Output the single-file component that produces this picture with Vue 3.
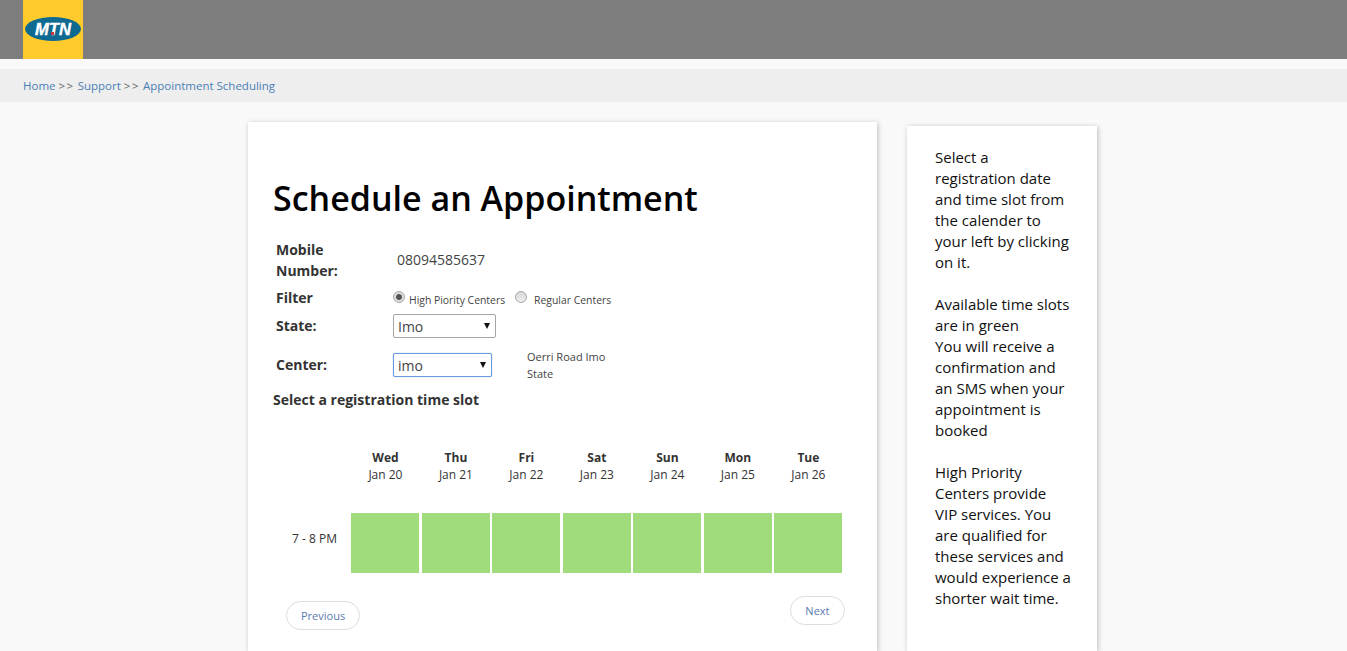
<script setup>
const days = [
  { name: 'Wed', date: 'Jan 20' },
  { name: 'Thu', date: 'Jan 21' },
  { name: 'Fri', date: 'Jan 22' },
  { name: 'Sat', date: 'Jan 23' },
  { name: 'Sun', date: 'Jan 24' },
  { name: 'Mon', date: 'Jan 25' },
  { name: 'Tue', date: 'Jan 26' },
]
</script>

<template>
  <header class="topbar">
    <div class="logo">
      <svg width="60" height="59" viewBox="0 0 60 59">
        <ellipse cx="30" cy="29" rx="28" ry="12" fill="#0f6a92" />
        <text x="30" y="35" text-anchor="middle" textLength="36" lengthAdjust="spacingAndGlyphs" class="logo-text">MTN</text>
        <rect x="28" y="32" width="3" height="3" fill="#c8323c" />
      </svg>
    </div>
  </header>

  <nav class="crumbs">
    <a href="#">Home</a> <span class="sep">&gt;&gt;</span> <a href="#">Support</a> <span class="sep">&gt;&gt;</span> <a href="#">Appointment Scheduling</a>
  </nav>

  <main class="content">
    <section class="card">
      <h1>Schedule an Appointment</h1>

      <div class="form">
        <label class="field-label">Mobile Number:</label>
        <div class="mobile">08094585637</div>

        <label class="field-label">Filter</label>
        <div class="filter">
          <input type="radio" name="center" checked />
          <span class="radio-text">High Piority Centers</span>
          <input type="radio" name="center" />
          <span class="radio-text regular">Regular Centers</span>
        </div>

        <label class="field-label state-label">State:</label>
        <div>
          <div class="fake-select state">Imo<span class="arrow"></span></div>
        </div>

        <label class="field-label">Center:</label>
        <div class="center-row">
          <div class="fake-select center">imo<span class="arrow"></span></div>
          <div class="address">Oerri Road Imo State</div>
        </div>
      </div>

      <h2>Select a registration time slot</h2>

      <div class="calendar">
        <div></div>
        <div v-for="day in days" :key="day.name" class="day">
          <strong>{{ day.name }}</strong>
          <span>{{ day.date }}</span>
        </div>
        <div class="slot-label">7 - 8 PM</div>
        <div v-for="day in days" :key="day.date" class="slot"></div>
      </div>

      <div class="pager">
        <a href="#" class="page-btn prev">Previous</a>
        <a href="#" class="page-btn next">Next</a>
      </div>
    </section>

    <aside class="help">
      <p>Select a<br />registration date<br />and time slot from<br />the calender to<br />your left by clicking<br />on it.</p>
      <p>Available time slots<br />are in green<br />You will receive a<br />confirmation and<br />an SMS when your<br />appointment is<br />booked</p>
      <p>High Priority<br />Centers provide<br />VIP services. You<br />are qualified for<br />these services and<br />would experience a<br />shorter wait time.</p>
    </aside>
  </main>
</template>

<style>
html, body {
  margin: 0;
  background: #f9f9f9;
  overflow: hidden;
}
</style>

<style scoped>
.topbar {
  height: 59px;
  background: #7d7d7d;
  padding-left: 23px;
}

.logo {
  width: 60px;
  height: 59px;
  background: #ffca2c;
}

.logo svg {
  display: block;
}

.logo-text {
  font-family: "Liberation Sans", sans-serif;
  font-size: 17px;
  font-weight: 700;
  font-style: italic;
  fill: #fff;
  stroke: #fff;
  stroke-width: 0.4;
}

.crumbs {
  margin-top: 10px;
  height: 33px;
  line-height: 33px;
  padding-left: 23px;
  background: #eee;
  font-family: "Open Sans", sans-serif;
  font-size: 11.5px;
  color: #666;
}

.crumbs a {
  color: #4a7fb5;
  text-decoration: none;
}

.sep {
  letter-spacing: 1.5px;
}

.content {
  display: flex;
  align-items: flex-start;
  gap: 30px;
  padding-left: 248px;
  margin-top: 20px;
  font-family: "Open Sans", sans-serif;
}

.card {
  width: 629px;
  height: 529px;
  box-sizing: border-box;
  padding: 55px 0 0 25px;
  background: #fff;
  box-shadow: 1px 1px 5px rgba(0, 0, 0, 0.25);
  color: #333;
}

h1 {
  margin: 0 0 19px;
  font-size: 34px;
  line-height: 42px;
  font-weight: 600;
  color: #000;
}

.form {
  display: grid;
  grid-template-columns: 117px 1fr;
  grid-template-rows: 44px 30px 28px 49px;
  padding-left: 3px;
  align-items: center;
}

.field-label {
  width: 90px;
  font-size: 14px;
  line-height: 21px;
  font-weight: 700;
}

.state-label {
  margin-top: -2px;
}

.mobile {
  padding: 0 0 2px 4px;
  font-size: 14px;
  color: #444;
}

.filter {
  display: flex;
  align-items: center;
  font-size: 10.4px;
  color: #444;
}

.filter input {
  appearance: none;
  box-sizing: border-box;
  width: 12px;
  height: 12px;
  margin: 0 4px 0 0;
  border: 1px solid #a9a9a9;
  border-radius: 50%;
  background: linear-gradient(#d8d8d8, #eee);
}

.filter input:checked {
  background: radial-gradient(circle, #555 0, #555 2.5px, #ddd 3.5px);
}

.radio-text {
  margin-top: 6px;
  margin-right: 10px;
}

.regular {
  margin-left: 3px;
}

.fake-select {
  position: relative;
  box-sizing: border-box;
  height: 24px;
  line-height: 24px;
  padding-left: 4px;
  background: #fff;
  border: 1px solid #a6a6a6;
  border-radius: 2px;
  font-size: 14px;
  color: #444;
}

.state {
  width: 103px;
}

.center {
  width: 99px;
  border-color: #6a9be0;
  box-shadow: 0 0 1px #6a9be0;
}

.arrow {
  position: absolute;
  right: 5px;
  top: 8px;
  border-left: 3.5px solid transparent;
  border-right: 3.5px solid transparent;
  border-top: 6px solid #111;
}

.center-row {
  display: flex;
  align-items: center;
  gap: 35px;
}

.address {
  width: 90px;
  font-size: 11px;
  line-height: 17px;
  color: #444;
}

h2 {
  margin: 1px 0 0;
  font-size: 14px;
  line-height: 20px;
  font-weight: 700;
}

.calendar {
  display: grid;
  grid-template-columns: 76px repeat(7, 68.1px);
  grid-template-rows: 64px 60px;
  column-gap: 2.4px;
  margin-top: 39px;
  width: 569px;
}

.day {
  display: flex;
  flex-direction: column;
  align-items: center;
  font-size: 12px;
  line-height: 17px;
}

.slot-label {
  text-align: right;
  padding-right: 12px;
  line-height: 52px;
  font-size: 12px;
}

.slot {
  background: #a0db7c;
}

.pager {
  display: flex;
  justify-content: space-between;
  align-items: flex-start;
  width: 559px;
  margin: 23px 0 0 13px;
}

.page-btn {
  box-sizing: border-box;
  height: 29px;
  line-height: 27px;
  padding: 0 14px;
  border: 1px solid #ddd;
  border-radius: 15px;
  font-size: 11px;
  color: #5a78b0;
  text-decoration: none;
}

.prev {
  margin-top: 5px;
}

.next {
  padding: 0 14.5px;
}

.help {
  width: 190px;
  height: 525px;
  box-sizing: border-box;
  margin-top: 4px;
  padding: 21px 10px 0 28px;
  background: #fff;
  box-shadow: 1px 1px 5px rgba(0, 0, 0, 0.25);
  font-size: 15px;
  line-height: 21px;
  color: #111;
  white-space: nowrap;
}

.help p {
  margin: 0 0 21px;
}
</style>
